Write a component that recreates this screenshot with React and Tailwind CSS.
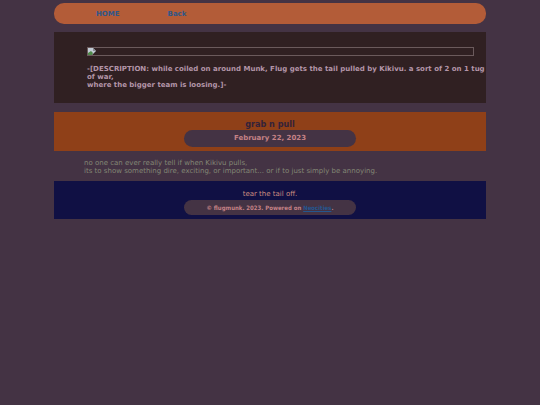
import React from "react";

const links = [
  { label: "HOME", href: "#home" },
  { label: "Back", href: "#back" },
];

const MissingImage = () => (
  <div role="img" aria-label="comic page" className="h-[9px] border border-[#6b5a5c]">
    <svg className="block" width="8" height="7" viewBox="0 0 8 7">
      <path d="M0 0h5l3 3v4H0z" fill="#c3ccd6" />
      <path d="M0 7V5l3-2 2 2-1 2z" fill="#4f8a4a" />
      <path d="M5 0v3h3z" fill="#8b8f96" />
      <path d="M4 7l4-4v4z" fill="#302022" />
    </svg>
  </div>
);

const Pill = ({ children }) => (
  <div className="mx-auto flex w-2/5 items-center justify-center rounded-full bg-[#443344] font-bold text-[#c48286]">
    {children}
  </div>
);

const App = () => {
  return (
    <div className="min-h-screen bg-[#443344] px-[10%] pt-[3px] font-['DejaVu_Sans',sans-serif] text-[7px] leading-[8px]">
      <nav className="flex gap-12 rounded-[10px] bg-[#b35c38] px-[42px] pt-[7px] pb-[6px] font-bold text-[#2f5788]">
        {links.map((link) => (
          <a key={link.label} href={link.href}>{link.label}</a>
        ))}
      </nav>

      <main className="mt-2 bg-[#302022] pt-[15px] pb-[14px] pl-[33px] text-[#b395a8]">
        <div className="pr-3">
          <MissingImage />
        </div>
        <p className="mt-[9px] font-bold">
          -[DESCRIPTION: while coiled on around Munk, Flug gets the tail pulled by Kikivu. a sort of 2 on 1 tug of war,
          <br />
          where the bigger team is loosing.]-
        </p>
      </main>

      <header className="mt-[9px] bg-[#8f4018] pt-[7px] pb-1 text-center">
        <h1 className="font-['DejaVu_Sans_Condensed','DejaVu_Sans',sans-serif] text-[9px] leading-[10px] font-bold text-[#33223a]">grab n pull</h1>
        <div className="mt-px leading-[17px]">
          <Pill>February 22, 2023</Pill>
        </div>
      </header>

      <p className="pt-2 pr-3 pb-[6px] pl-[30px] text-[#838775]">
        no one can ever really tell if when Kikivu pulls,
        <br />
        its to show something dire, exciting, or important... or if to just simply be annoying.
      </p>

      <footer className="bg-[#101044] pt-[9px] pb-1 text-center text-[#cc8e80]">
        <p>tear the tail off.</p>
        <div className="mt-[2px] font-['DejaVu_Sans_Condensed','DejaVu_Sans',sans-serif] text-[6px] leading-[15px]">
          <Pill>
            <span>© flugmunk. 2023. Powered on <a href="#neocities" className="text-[#24568f] underline">Neocities</a>.</span>
          </Pill>
        </div>
      </footer>
    </div>
  );
};

export default App;
